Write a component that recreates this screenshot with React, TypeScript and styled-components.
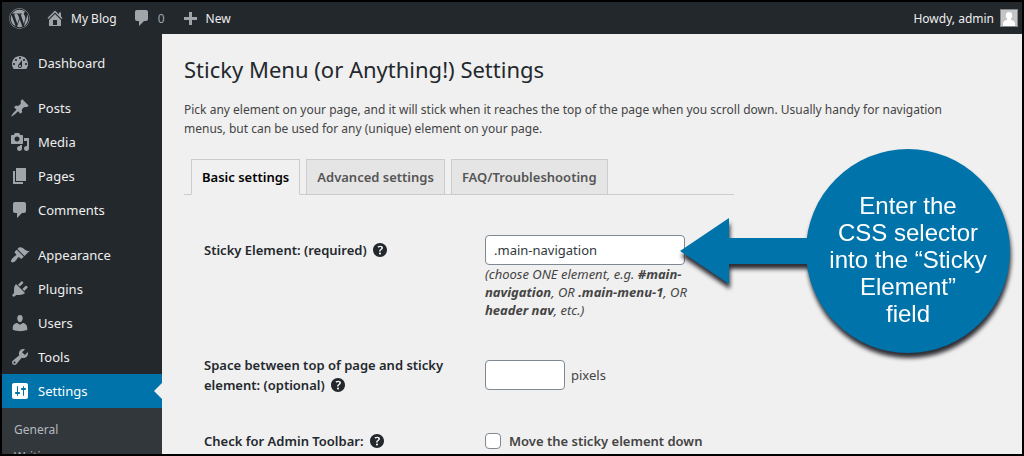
import React from "react";
import styled, { createGlobalStyle, css } from "styled-components";
import { FaWordpress } from "react-icons/fa";

const GlobalStyle = createGlobalStyle`
  *, *::before, *::after { box-sizing: border-box; }
  body {
    margin: 0;
    background: #000;
    color: #444;
    font-family: "Noto Sans", "Open Sans", sans-serif;
    font-size: 12px;
  }
  a { color: inherit; text-decoration: none; }
`;

const ICONS = {
  home: "M16 8.5l1.53 1.53-1.06 1.06L10 4.6l-6.47 6.49-1.06-1.06L10 2.5l4 4v-2h2v4zm-6-2.46l6 5.99V18H4v-5.97zM12 17v-5H8v5h4z",
  comments: "M5 2h9c1.1 0 2 .9 2 2v7c0 1.1-.9 2-2 2h-2l-5 5v-5H5c-1.1 0-2-.9-2-2V4c0-1.1.9-2 2-2z",
  plus: "M17 9v3h-5v5H9v-5H4V9h5V4h3v5h5z",
  dashboard: "M3.76 16h12.48c1.1-1.37 1.76-3.11 1.76-5 0-4.42-3.58-8-8-8s-8 3.58-8 8c0 1.89.66 3.63 1.76 5zM10 4c.55 0 1 .45 1 1s-.45 1-1 1-1-.45-1-1 .45-1 1-1zM6 6c.55 0 1 .45 1 1s-.45 1-1 1-1-.45-1-1 .45-1 1-1zm8 0c.55 0 1 .45 1 1s-.45 1-1 1-1-.45-1-1 .45-1 1-1zm-5.37 5.55L12 7v6c0 1.1-.9 2-2 2s-2-.9-2-2c0-.57.24-1.08.63-1.45zM4 10c.55 0 1 .45 1 1s-.45 1-1 1-1-.45-1-1 .45-1 1-1zm12 0c.55 0 1 .45 1 1s-.45 1-1 1-1-.45-1-1 .45-1 1-1zm-5 3c0-.55-.45-1-1-1s-1 .45-1 1 .45 1 1 1 1-.45 1-1z",
  posts: "M10.44 3.02l1.82-1.82 6.36 6.35-1.83 1.82c-1.05-.68-2.48-.57-3.41.36l-.75.75c-.92.93-1.04 2.35-.35 3.41l-1.83 1.82-2.41-2.41-2.8 2.79c-.42.42-3.38 2.71-3.8 2.29s1.86-3.39 2.28-3.81l2.79-2.79L4.1 9.36l1.83-1.82c1.05.69 2.48.57 3.4-.36l.75-.75c.93-.92 1.05-2.35.36-3.41z",
  media: "M13 11V4c0-.55-.45-1-1-1h-1.67L9 1H5L3.67 3H2c-.55 0-1 .45-1 1v7c0 .55.45 1 1 1h10c.55 0 1-.45 1-1zM7 4.5c1.38 0 2.5 1.12 2.5 2.5S8.38 9.5 7 9.5 4.5 8.38 4.5 7 5.62 4.5 7 4.5zM14 6h5v10.5c0 1.38-1.12 2.5-2.5 2.5S14 17.88 14 16.5s1.12-2.5 2.5-2.5c.17 0 .34.02.5.05V9h-3V6zm-4 8.05V13h2v3.5c0 1.38-1.12 2.5-2.5 2.5S7 17.88 7 16.5 8.12 14 9.5 14c.17 0 .34.02.5.05z",
  pages: "M6 15V2h10v13H6zm-1 1h8v2H3V5h2v11z",
  appearance: "M14.48 11.06L7.41 3.99l1.5-1.5c.5-.56 2.3-.47 3.51.32 1.21.8 1.43 1.28 2.91 2.1 1.18.64 2.45 1.26 4.45.85zm-.71.71L6.7 4.7 4.93 6.47c-.39.39-.39 1.02 0 1.41l1.06 1.06c.39.39.39 1.03 0 1.42-.6.6-1.43 1.11-2.21 1.69-.35.26-.7.53-1.01.84C1.43 14.23.4 16.08 1.4 17.07c.99 1 2.84-.03 4.18-1.36.31-.31.58-.66.85-1.02.57-.78 1.08-1.61 1.69-2.21.39-.39 1.02-.39 1.41 0l1.06 1.06c.39.39 1.02.39 1.41 0z",
  plugins: "M13.11 4.36L9.87 7.6 8 5.73l3.24-3.24c.35-.34 1.05-.2 1.56.32.52.51.66 1.21.31 1.55zm-8 1.77l.91-1.12 9.01 9.01-1.19.84c-.71.71-2.63 1.16-3.82 1.16H6.14L4.9 17.26c-.59.59-1.54.59-2.12 0-.59-.58-.59-1.53 0-2.12l1.24-1.24v-3.88c0-1.13.4-3.19 1.09-3.89zm7.26 3.97l3.24-3.24c.34-.35 1.04-.21 1.55.31.52.51.66 1.21.31 1.55l-3.24 3.25z",
  users: "M10 9.25c-2.27 0-2.73-3.44-2.73-3.44C7 4.02 7.82 2 9.97 2c2.16 0 2.98 2.02 2.71 3.81 0 0-.41 3.44-2.68 3.44zm0 2.57L12.72 10c2.39 0 4.52 2.33 4.52 4.53v2.49s-3.65 1.13-7.24 1.13c-3.65 0-7.24-1.13-7.24-1.13v-2.49c0-2.25 1.94-4.48 4.47-4.48z",
  tools: "M16.68 9.77c-1.34 1.34-3.3 1.67-4.95.99l-5.41 6.52c-.99.99-2.59.99-3.58 0s-.99-2.59 0-3.57l6.52-5.42c-.68-1.65-.35-3.61.99-4.95 1.28-1.28 3.12-1.62 4.72-1.06l-2.89 2.89 2.82 2.82 2.86-2.87c.53 1.58.18 3.39-1.08 4.65zM3.81 16.21c.4.39 1.04.39 1.43 0 .4-.4.4-1.04 0-1.43-.39-.4-1.03-.4-1.43 0-.39.39-.39 1.03 0 1.43z",
  settings: "M18 16V4c0-1.1-.9-2-2-2H4c-1.1 0-2 .9-2 2v12c0 1.1.9 2 2 2h12c1.1 0 2-.9 2-2zM8 11h1c.55 0 1 .45 1 1s-.45 1-1 1H8v1.5c0 .28-.22.5-.5.5s-.5-.22-.5-.5V13H6c-.55 0-1-.45-1-1s.45-1 1-1h1V5.5c0-.28.22-.5.5-.5s.5.22.5.5V11zm5-2h-1c-.55 0-1-.45-1-1s.45-1 1-1h1V5.5c0-.28.22-.5.5-.5s.5.22.5.5V7h1c.55 0 1 .45 1 1s-.45 1-1 1h-1v5.5c0 .28-.22.5-.5.5s-.5-.22-.5-.5V9z",
  help: "M17 10c0-3.87-3.14-7-7-7-3.87 0-7 3.13-7 7s3.13 7 7 7c3.86 0 7-3.13 7-7zm-6.3 1.48H9.14v-.43c0-.38.08-.7.24-.98s.46-.57.88-.89c.41-.29.68-.53.81-.71.14-.18.2-.39.2-.62 0-.25-.09-.44-.28-.58-.19-.13-.45-.19-.79-.19-.58 0-1.25.19-2 .57l-.64-1.28c.87-.49 1.8-.74 2.77-.74.81 0 1.45.2 1.92.58.48.39.71.91.71 1.55 0 .43-.09.8-.29 1.11-.19.32-.57.67-1.11 1.06-.38.28-.61.49-.71.63-.1.15-.15.34-.15.57v.35zm-1.47 2.74c-.18-.17-.27-.42-.27-.73 0-.33.08-.58.26-.75s.43-.25.77-.25c.32 0 .57.09.75.26s.27.42.27.74c0 .3-.09.55-.27.72-.18.18-.43.27-.75.27-.33 0-.58-.09-.76-.26z",
};

type IconName = keyof typeof ICONS;

const Glyph = styled.svg`
  display: block;
  flex: none;
  width: 20px;
  height: 20px;
  fill: currentColor;
`;

const Icon = ({ name }: { name: IconName }) => (
  <Glyph viewBox="0 0 20 20" aria-hidden="true">
    <path d={ICONS[name]} />
  </Glyph>
);

const Frame = styled.div`
  display: flex;
  flex-direction: column;
  height: 100vh;
  border: 2px solid #000;
  background: #f0f0f0;
  overflow: hidden;
`;

const AdminBar = styled.header`
  display: flex;
  flex: none;
  align-items: center;
  gap: 15px;
  height: 32px;
  padding: 0 4px 0 7px;
  background: #23282d;
  color: #eee;
  font-size: 12px;
`;

const BarLink = styled.a<{ $muted?: boolean; $end?: boolean }>`
  display: flex;
  align-items: center;
  gap: 6px;
  color: ${(p) => (p.$muted ? "#a0a5aa" : "#eee")};
  ${(p) => p.$end && css`margin-left: auto;`}

  svg { color: #a0a5aa; }
`;

const Avatar = styled.svg`
  width: 18px;
  height: 18px;
  border: 1px solid #82878c;
  background: #c5c5c5;
`;

const Body = styled.div`
  display: flex;
  flex: 1;
  min-height: 0;
`;

const Sidebar = styled.nav`
  flex: none;
  width: 160px;
  padding-top: 12px;
  background: #23282d;
`;

const MenuGroup = styled.ul`
  margin: 0 0 11px;
  padding: 0;
  list-style: none;
`;

const MenuLink = styled.a<{ $active?: boolean }>`
  position: relative;
  display: flex;
  align-items: center;
  gap: 8px;
  height: 34px;
  padding-left: 8px;
  color: #eee;
  font-size: 13px;

  svg { color: #a0a5aa; }

  ${(p) =>
    p.$active &&
    css`
      background: #0073aa;
      color: #fff;

      svg { color: #fff; }

      &::after {
        content: "";
        position: absolute;
        top: 9px;
        right: 0;
        border: 8px solid transparent;
        border-right-color: #f0f0f0;
        border-left-width: 0;
      }
    `}
`;

const Submenu = styled.ul`
  margin: 0;
  padding: 8px 12px;
  background: #32373c;
  color: #b4b9be;
  font-size: 12px;
  line-height: 27px;
  list-style: none;
`;

const Content = styled.main`
  flex: 1;
  min-width: 0;
  padding: 20px 20px 0 22px;
`;

const Title = styled.h1`
  margin: 0;
  color: #23282d;
  font-size: 22px;
  font-weight: 400;
  line-height: 30px;
`;

const Intro = styled.p`
  max-width: 800px;
  margin: 16px 0 21px;
  line-height: 19px;
`;

const Tabs = styled.div`
  display: flex;
  gap: 6px;
  width: 550px;
  padding-left: 7px;
  border-bottom: 1px solid #ccc;
`;

const Tab = styled.button<{ $active?: boolean }>`
  height: 36px;
  margin-bottom: -1px;
  padding: 0 10px;
  border: 1px solid #ccc;
  border-bottom-color: ${(p) => (p.$active ? "#f0f0f0" : "#ccc")};
  background: ${(p) => (p.$active ? "#f0f0f0" : "#e5e5e5")};
  color: ${(p) => (p.$active ? "#000" : "#555")};
  font-family: inherit;
  font-size: 13px;
  font-weight: 600;
`;

const Form = styled.form`
  display: grid;
  grid-template-columns: 261px 230px;
  column-gap: 20px;
  row-gap: 36px;
  padding: 40px 0 0 20px;
  font-size: 13px;
`;

const FieldLabel = styled.label<{ $beside?: boolean }>`
  padding-top: ${(p) => (p.$beside ? 5 : 0)}px;
  color: #23282d;
  font-weight: 600;
  line-height: 20px;

  svg {
    display: inline-block;
    margin: -4px 0;
    vertical-align: -1px;
  }
`;

const Field = styled.div`
  position: relative;
  align-self: center;
`;

const TextInput = styled.input<{ $width: number }>`
  display: inline-block;
  vertical-align: middle;
  width: ${(p) => p.$width}px;
  height: 30px;
  padding: 0 8px;
  border: 1px solid #7e8993;
  border-radius: 4px;
  background: #fff;
  color: #32373c;
  font-family: inherit;
  font-size: 13px;
`;

const Hint = styled.p`
  margin: 0;
  font-style: italic;
  line-height: 18px;
`;

const Unit = styled.span`
  margin-left: 6px;
  vertical-align: middle;
`;

const CheckLabel = styled.label`
  display: flex;
  align-items: center;
  gap: 8px;
  font-weight: 600;
  line-height: 20px;
  white-space: nowrap;
`;

const Checkbox = styled.input`
  appearance: none;
  width: 16px;
  height: 16px;
  margin: 0;
  border: 1px solid #7e8993;
  border-radius: 4px;
  background: #fff;
`;

const Callout = styled.aside`
  position: absolute;
  top: -86px;
  left: 195px;
  display: flex;
  align-items: center;
  filter: drop-shadow(1px 5px 2px rgba(10, 10, 20, 0.85));
`;

const Arrow = styled.svg`
  width: 130px;
  height: 66px;
  margin-right: -4px;
  fill: #0073aa;
`;

const Bubble = styled.div`
  display: flex;
  align-items: center;
  justify-content: center;
  width: 204px;
  height: 204px;
  padding-top: 16px;
  border-radius: 50%;
  background: #0073aa;
  color: #fff;
  font-family: "Liberation Sans", Arial, sans-serif;
  font-size: 24px;
  line-height: 27px;
  text-align: center;
`;

interface MenuItem {
  label: string;
  icon: IconName;
  active?: boolean;
}

const MENU: MenuItem[][] = [
  [{ label: "Dashboard", icon: "dashboard" }],
  [
    { label: "Posts", icon: "posts" },
    { label: "Media", icon: "media" },
    { label: "Pages", icon: "pages" },
    { label: "Comments", icon: "comments" },
  ],
  [
    { label: "Appearance", icon: "appearance" },
    { label: "Plugins", icon: "plugins" },
    { label: "Users", icon: "users" },
    { label: "Tools", icon: "tools" },
    { label: "Settings", icon: "settings", active: true },
  ],
];

export default function App() {
  return (
    <>
      <GlobalStyle />
      <Frame>
        <AdminBar>
          <BarLink href="#" aria-label="WordPress">
            <FaWordpress size={21} />
          </BarLink>
          <BarLink href="#"><Icon name="home" />My Blog</BarLink>
          <BarLink href="#" $muted><Icon name="comments" />0</BarLink>
          <BarLink href="#"><Icon name="plus" />New</BarLink>
          <BarLink href="#" $end>
            Howdy, admin
            <Avatar viewBox="0 0 16 16" aria-hidden="true">
              <path
                fill="#fff"
                d="M8 2c2 0 3.200 1.500 3.200 3.500 0 1.300-.5 2.500-1.400 3.200v1c1.800.5 4.200 1.500 4.200 3.800V16H2v-2.500c0-2.300 2.400-3.300 4.200-3.800v-1C5.300 8 4.800 6.800 4.800 5.500 4.800 3.500 6 2 8 2z"
              />
            </Avatar>
          </BarLink>
        </AdminBar>
        <Body>
          <Sidebar>
            {MENU.map((group) => (
              <MenuGroup key={group[0].label}>
                {group.map((item) => (
                  <li key={item.label}>
                    <MenuLink href="#" $active={item.active}>
                      <Icon name={item.icon} />
                      {item.label}
                    </MenuLink>
                    {item.active && (
                      <Submenu>
                        <li><a href="#">General</a></li>
                        <li><a href="#">Writing</a></li>
                      </Submenu>
                    )}
                  </li>
                ))}
              </MenuGroup>
            ))}
          </Sidebar>
          <Content>
            <Title>Sticky Menu (or Anything!) Settings</Title>
            <Intro>
              Pick any element on your page, and it will stick when it reaches the top of the page
              when you scroll down. Usually handy for navigation menus, but can be used for any
              (unique) element on your page.
            </Intro>
            <Tabs role="tablist">
              <Tab type="button" role="tab" aria-selected $active>Basic settings</Tab>
              <Tab type="button" role="tab">Advanced settings</Tab>
              <Tab type="button" role="tab">FAQ/Troubleshooting</Tab>
            </Tabs>
            <Form>
              <FieldLabel htmlFor="element" $beside>
                Sticky Element: (required) <Icon name="help" />
              </FieldLabel>
              <Field>
                <TextInput id="element" type="text" defaultValue=".main-navigation" $width={200} />
                <Hint>
                  (choose ONE element, e.g. <b>#main-navigation</b>, OR <b>.main-menu-1</b>, OR{" "}
                  <b>header nav</b>, etc.)
                </Hint>
                <Callout>
                  <Arrow viewBox="0 0 130 66" aria-hidden="true">
                    <path d="M0 33L49 0v20h81v26H49v20z" />
                  </Arrow>
                  <Bubble>
                    Enter the
                    <br />
                    CSS selector
                    <br />
                    into the “Sticky
                    <br />
                    Element”
                    <br />
                    field
                  </Bubble>
                </Callout>
              </Field>
              <FieldLabel htmlFor="space">
                Space between top of page and sticky element: (optional) <Icon name="help" />
              </FieldLabel>
              <Field>
                <TextInput id="space" type="text" $width={80} />
                <Unit>pixels</Unit>
              </Field>
              <FieldLabel htmlFor="toolbar">
                Check for Admin Toolbar: <Icon name="help" />
              </FieldLabel>
              <CheckLabel>
                <Checkbox id="toolbar" type="checkbox" />
                Move the sticky element down
              </CheckLabel>
            </Form>
          </Content>
        </Body>
      </Frame>
    </>
  );
}
